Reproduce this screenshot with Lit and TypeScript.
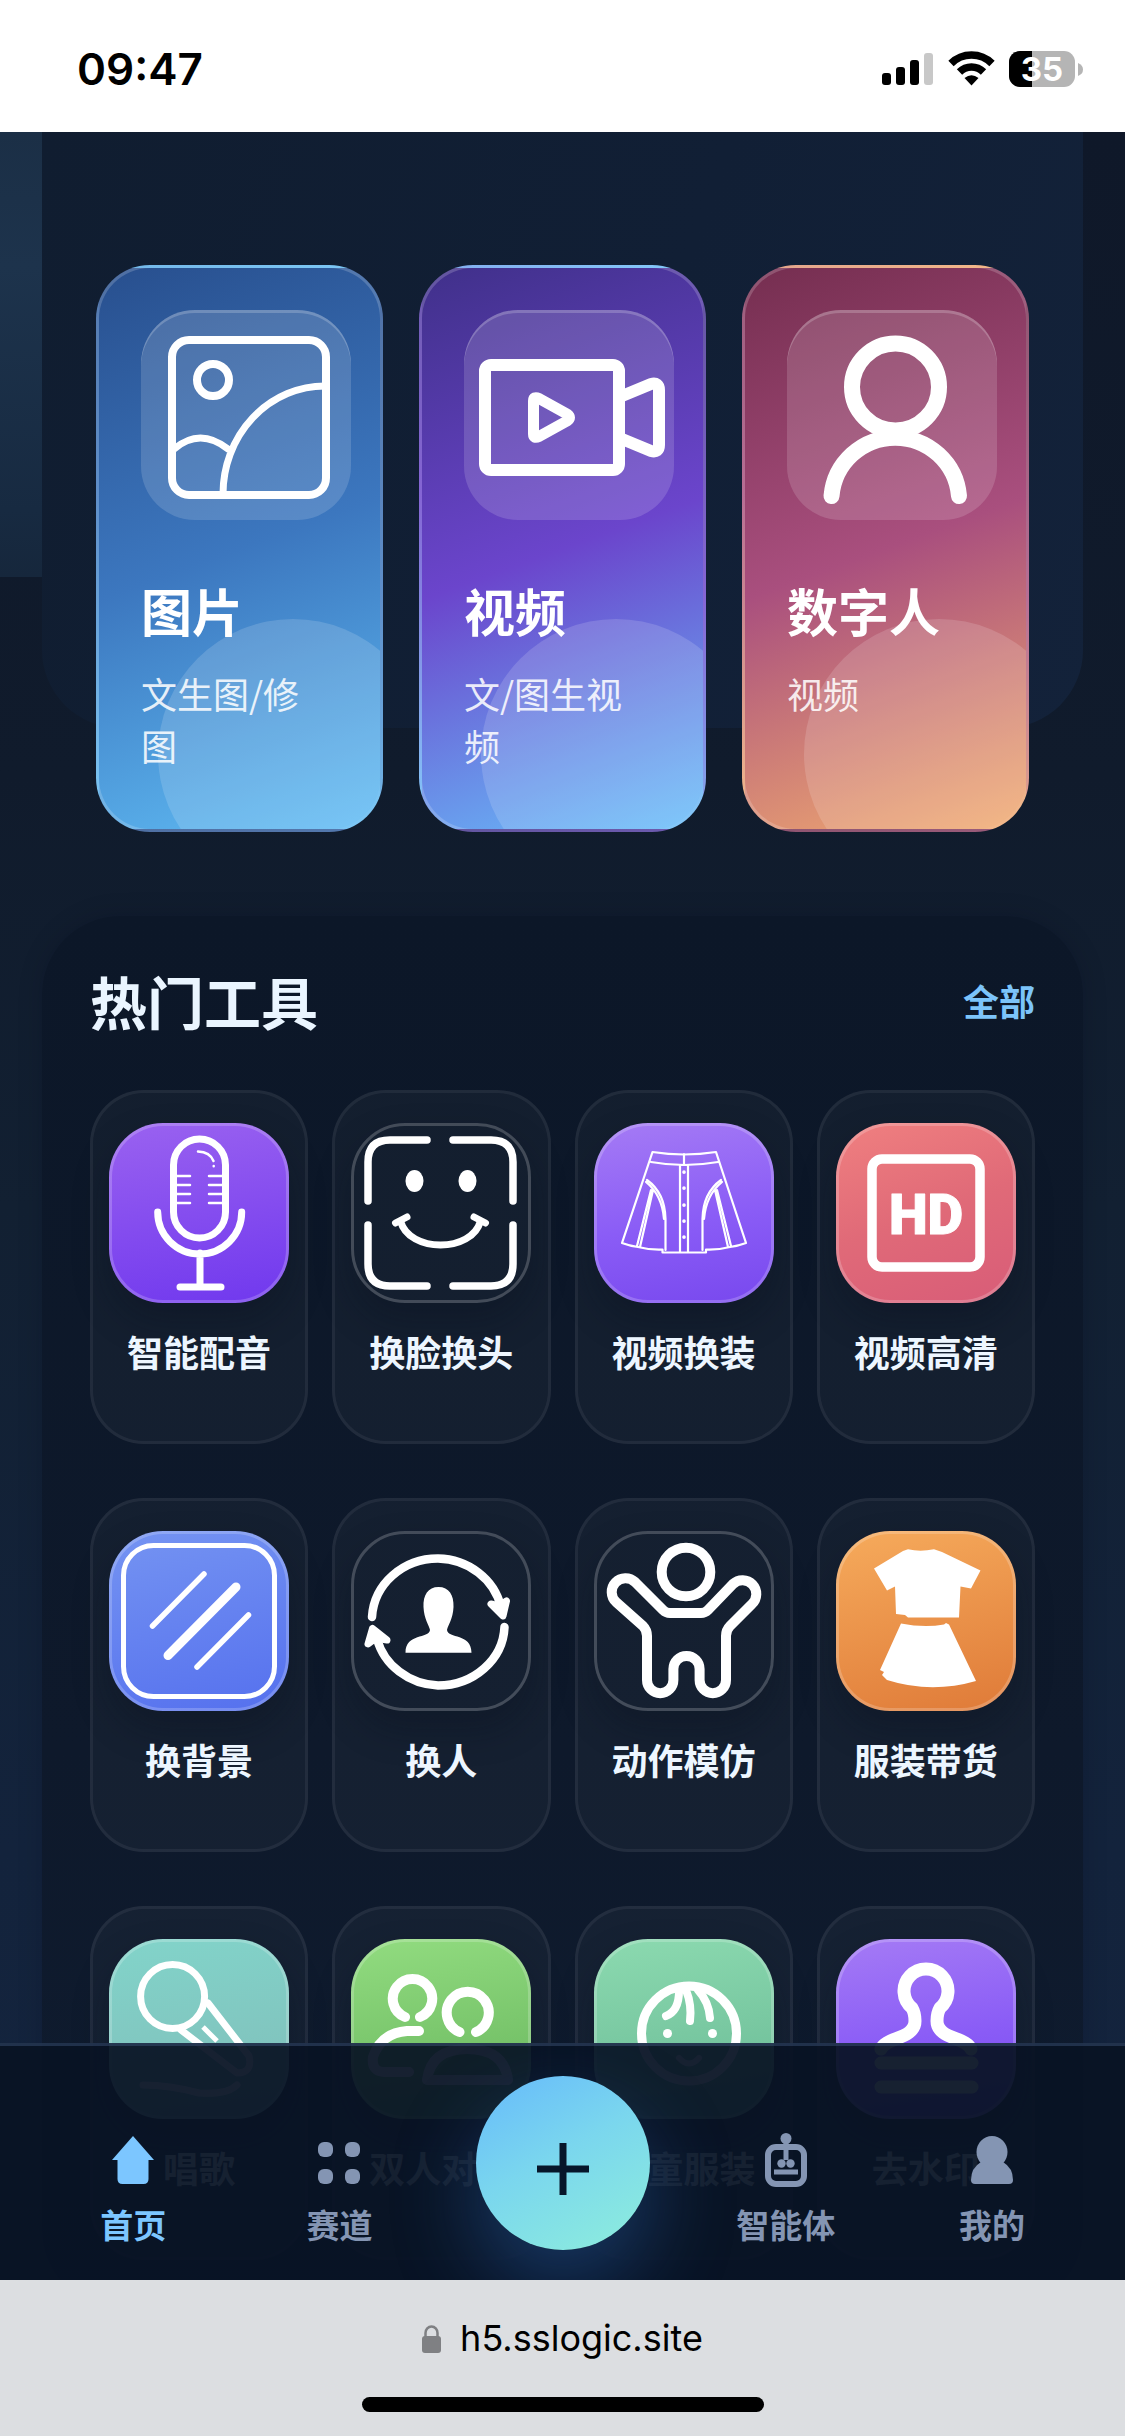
import { LitElement, html, css, svg, SVGTemplateResult } from "lit";
import { customElement } from "lit/decorators.js";

interface Entry {
  label: string;
  tone: string;
  icon: SVGTemplateResult;
}

const features: (Entry & { note: string })[] = [
  {
    label: "图片",
    note: "文生图/修图",
    tone: "blue",
    icon: svg`
      <g stroke-width="8">
        <rect x="31" y="30" width="154" height="155" rx="17" />
        <circle cx="72" cy="70" r="16" />
        <path stroke-width="7" d="M184 76 A102 108 0 0 0 82 184 M33 139 Q59 117 87 139" />
      </g>`,
  },
  {
    label: "视频",
    note: "文/图生视频",
    tone: "violet",
    icon: svg`
      <g stroke-width="12">
        <rect x="21" y="55" width="134" height="105" rx="6" />
        <path stroke-width="11" d="M69.500 91 Q69.500 86 75 88.500 L103 104 Q108 107.500 103 111 L75 126.500 Q69.500 129 69.500 124 Z" />
        <path d="M158 86 L187 74 Q195 72 195 80 V135 Q195 143 187 141 L158 129" />
      </g>`,
  },
  {
    label: "数字人",
    note: "视频",
    tone: "rose",
    icon: svg`
      <g stroke-width="16">
        <circle cx="108.500" cy="77" r="43.500" />
        <path d="M44.500 186 A64 64 0 0 1 172 186" />
      </g>`,
  },
];

const tools: Entry[] = [
  {
    label: "智能配音",
    tone: "purple-deep",
    icon: svg`
      <g stroke-width="7">
        <rect x="64.500" y="16" width="52" height="99" rx="26" />
        <path d="M48.700 89 A42 42 0 0 0 132.700 89 M91 130 V164 M71 164 H112" />
        <path stroke-width="2.500" d="M67 53 H81 M67 62 H81 M67 71 H81 M67 80 H81 M100 53 H114 M100 62 H114 M100 71 H114 M100 80 H114 M89 28.500 Q101 29 104.500 38 M104.700 43 V43.200" />
      </g>`,
  },
  {
    label: "换脸换头",
    tone: "clear",
    icon: svg`
      <g stroke-width="7.500">
        <path d="M17 78 V39 Q17 17 39 17 H76 M102 17 H140 Q162 17 162 39 V78 M162 102 V141 Q162 163 140 163 H102 M76 163 H39 Q17 163 17 141 V102" />
        <path stroke-width="7" d="M49.500 98 C58 130 121 130 129.500 98 M44.500 100 L56 94 M123 94 L134.500 100" />
        <g class="solid"><ellipse cx="63.500" cy="58" rx="9" ry="11" /><ellipse cx="116.500" cy="58" rx="9" ry="11" /></g>
      </g>`,
  },
  {
    label: "视频换装",
    tone: "purple",
    icon: svg`
      <g stroke-width="2.200">
        <path d="M58.500 29 Q90 34 122 29 L152 120 Q144 123 136 124 Q124 127 112 126.500 V129.500 H68.500 V126.500 Q56 127 44 124 Q36 123 28 120 Z M57 39 Q90 45 124 39 M90 31 V42 M86 42 V129 M94 42 V129" />
        <path d="M53 57 Q71 70 71.500 96 V127 M52 59 Q68 72 70 96 M59 67 L46 124 M57 67 L43 123 M127 57 Q109 70 108.500 96 V127 M128 59 Q112 72 110 96 M121 67 L134 124 M123 67 L137 123" />
        <path stroke-width="3.600" d="M90 49 V49.200 M90 65 V65.200 M90 82 V82.200 M90 98 V98.200 M90 114 V114.200" />
      </g>`,
  },
  {
    label: "视频高清",
    tone: "red",
    icon: svg`
      <rect x="36" y="36" width="108" height="108" rx="10" stroke-width="9.500" />
      <text class="mark" x="90" y="110.500" text-anchor="middle">HD</text>`,
  },
  {
    label: "换背景",
    tone: "indigo",
    icon: svg`
      <rect x="14.500" y="14.500" width="151" height="151" rx="30" stroke-width="5" />
      <path stroke-width="5.500" d="M43.500 95 L95 43 M88 136 L139.500 84" />
      <path stroke-width="9" d="M59 124.500 L127 56" />`,
  },
  {
    label: "换人",
    tone: "clear",
    icon: svg`
      <path stroke-width="8.500" d="M21 86 A66 62 0 0 1 87 27.500 A66 62 0 0 1 150 76 M153.500 96 A66.500 61 0 0 1 87 154.500 A66 62 0 0 1 26 108" />
      <path class="solid" stroke="#fff" stroke-width="7" d="M140 73 L148 75 L155.500 70 L152 85 Z M21.500 97.500 L17 113 L25 107 L36 109 Z" />
      <path class="solid" d="M87.500 56 C98 56 103 64 102.500 76 C102 88 97 94 96 99 C97 108 120.500 102 120.500 121.700 H54.500 C54.500 102 78 108 79 99 C78 94 73 88 72.500 76 C72 64 77 56 87.500 56 Z" />`,
  },
  {
    label: "动作模仿",
    tone: "clear",
    icon: svg`
      <g stroke-width="10">
        <circle cx="92" cy="41" r="24.300" />
        <path d="M41 51 L69 79 Q72 82 76 82 H107 Q111 82 114 79 L139 53 A13.500 13.500 0 0 1 158 73 L136 95 Q132 99 132 105 V149 A13.200 13.200 0 0 1 105.600 149 V138 A13.100 13.100 0 0 0 79.400 138 V149 A13.200 13.200 0 0 1 53 149 V105 Q53 99 49 95 L22 71 A13.500 13.500 0 0 1 41 51 Z" />
      </g>`,
  },
  {
    label: "服装带货",
    tone: "orange",
    icon: svg`
      <path class="solid" d="M38 37.500 L67 20 L72 18.300 Q84 21 98 18.300 L106 21 L144.500 39.500 L135 57.500 L124.500 55.500 L123 86.500 H72 L69 84 L60 83 L59 55.500 L51 59.500 Z" />
      <path class="solid" d="M65 92.500 Q88 97 108 93.500 L110 92 L113 93.500 L140 150 Q95 163 51 149 L46 144 L48 141 L44 139 Z" />`,
  },
  {
    label: "唱歌",
    tone: "teal",
    icon: svg`
      <g stroke-width="7">
        <circle cx="63.600" cy="57.500" r="32" />
        <path d="M99 64 L140 117 Q144 134 128 134 L72 91 M34 146 Q60 146 90 154 Q118 156 128 146" />
        <path stroke-width="5" stroke-linecap="butt" d="M94 88 L108 102" />
      </g>`,
  },
  {
    label: "双人对话",
    tone: "green",
    icon: svg`
      <g stroke-width="10">
        <path d="M54 78 A19.700 19.700 0 1 1 69 78 M108.500 93 A21 21 0 1 1 125 93 M68 92 H56 Q30 94 22 118 Q20 133 34 133 H58" />
        <path d="M76 141 Q80 110 116.500 110 Q153 110 157 141 Z" />
      </g>`,
  },
  {
    label: "儿童服装",
    tone: "mint",
    icon: svg`
      <g stroke-width="9">
        <circle cx="95" cy="94.500" r="47.500" />
        <path stroke-width="8" d="M85 52 Q85 72 72 77 M92 51 Q98 66 96 82 M104 51 Q115 63 116 79" />
        <path stroke-width="6" d="M85 119 Q95 130 105 119" />
        <g class="solid"><circle cx="73.500" cy="94.500" r="4.500" /><circle cx="118.500" cy="94.500" r="4.500" /></g>
      </g>`,
  },
  {
    label: "去水印",
    tone: "purple",
    icon: svg`
      <g stroke-width="13">
        <path d="M45 110 C50 98 79 100 79 82 Q79 74 76 69 A22 22 0 1 1 104 69 Q101 74 101 82 C101 100 130 98 135 110" />
        <path d="M45 124 H136 M45 148 H136" />
      </g>`,
  },
];

const homeIcon = svg`<path d="M21 0 L42 24 H36.500 V43 Q36.500 48 31.500 48 H10.500 Q5.500 48 5.500 43 V24 H0 Z" />`;
const gridIcon = svg`<rect x="0" y="6" width="15" height="15" rx="6" /><rect x="27" y="6" width="15" height="15" rx="6" /><rect x="0" y="33" width="15" height="15" rx="6" /><rect x="27" y="33" width="15" height="15" rx="6" />`;
const robotIcon = svg`<circle cx="21" cy="2.500" r="5.500" /><path d="M18.500 4 H23.500 V24 H18.500 Z" />
  <rect x="3" y="11" width="36" height="37" rx="8" fill="none" stroke="currentColor" stroke-width="6" />
  <circle cx="16.500" cy="27.500" r="4.200" /><circle cx="25.500" cy="27.500" r="4.200" /><rect x="9" y="33.500" width="24" height="5" />`;
const userIcon = svg`<ellipse cx="21" cy="16" rx="15.500" ry="16" /><path d="M10 26 H32 Q42 32 42 44 Q42 48 38 48 H4 Q0 48 0 44 Q0 32 10 26 Z" />`;

const tabs = [
  { label: "首页", icon: homeIcon, active: true },
  { label: "赛道", icon: gridIcon, active: false },
  { label: "智能体", icon: robotIcon, active: false },
  { label: "我的", icon: userIcon, active: false },
];

@customElement("status-bar")
class StatusBar extends LitElement {
  static styles = css`
    :host {
      display: flex;
      align-items: center;
      justify-content: space-between;
      height: 132px;
      padding: 6px 42px 0 77px;
      box-sizing: border-box;
      background: #fff;
      color: #000;
      font-family: Inter, "Liberation Sans", sans-serif;
    }
    .time { font-size: 44px; line-height: 54px; font-weight: 600; }
    .signals { display: block; width: 202px; height: 38px; }
    .level { font: 700 33px Inter, "Liberation Sans", sans-serif; }
  `;
  render() {
    return html`
      <span class="time">09:47</span>
      <svg class="signals" viewBox="0 0 202 38" role="img" aria-label="信号 Wi-Fi 电量">
        <rect x="1" y="23" width="9" height="12" rx="3" />
        <rect x="15" y="17" width="9" height="18" rx="3" />
        <rect x="29" y="10" width="9" height="25" rx="3" />
        <rect x="43" y="3" width="9" height="32" rx="3" fill="#c8c8c8" />
        <g fill="none" stroke="#000" stroke-width="7.500">
          <path d="M70 13.500 A29 29 0 0 1 111 13.500" />
          <path d="M78.500 22 A17 17 0 0 1 102.500 22" />
        </g>
        <path d="M83.500 28 Q90.500 22.500 97.500 28 L90.500 35.500 Z" />
        <clipPath id="cell"><rect x="128" y="1" width="66" height="36" rx="11" /></clipPath>
        <g clip-path="url(#cell)">
          <rect x="128" y="1" width="66" height="36" fill="#b5b5b5" />
          <rect x="128" y="1" width="23" height="36" />
        </g>
        <path d="M197 13 Q202 15 202 19.500 Q202 24 197 26 Z" fill="#b5b5b5" />
        <text class="level" x="161" y="31" text-anchor="middle" fill="#fff">35</text>
      </svg>
    `;
  }
}

@customElement("feature-panel")
class FeaturePanel extends LitElement {
  static styles = css`
    :host {
      display: block;
      height: 596px;
      padding: 133px 54px 0;
      box-sizing: border-box;
      border-radius: 0 0 78px 78px;
      background: linear-gradient(110deg, #101d30, #111f35 55%, #13223a);
    }
    .cards { display: grid; grid-template-columns: repeat(3, 1fr); gap: 36px; }
    .card {
      position: relative;
      overflow: hidden;
      display: flex;
      flex-direction: column;
      align-items: flex-start;
      height: 567px;
      padding: 42px;
      box-sizing: border-box;
      border: 3px solid rgba(255, 255, 255, 0.18);
      border-radius: 54px;
      color: #fff;
      text-align: left;
      text-decoration: none;
    }
    .card::after {
      content: "";
      position: absolute;
      right: -48px;
      bottom: -60px;
      width: 270px;
      height: 270px;
      border-radius: 50%;
      background: rgba(255, 255, 255, 0.15);
    }
    .blue { background-image: linear-gradient(160deg, #284f8e, #3c77bf 50%, #60bdf5); }
    .violet { background-image: linear-gradient(160deg, #40308a, #6b45cc 50%, #68c0fa); }
    .rose { background-image: linear-gradient(160deg, #752e50, #a94f7e 50%, #f2ac70); }
    .art {
      width: 210px;
      height: 210px;
      border-radius: 54px;
      background: rgba(255, 255, 255, 0.15);
      box-shadow: inset 0 3px 0 rgba(255, 255, 255, 0.2);
    }
    .art svg {
      display: block;
      fill: none;
      stroke: #fff;
      stroke-linecap: round;
      stroke-linejoin: round;
    }
    .title { z-index: 1; margin-top: 57px; font-size: 51px; line-height: 66px; font-weight: 600; }
    .note { z-index: 1; margin-top: 24px; font-size: 36px; line-height: 52px; opacity: 0.86; width: 180px; }
  `;
  render() {
    return html`<div class="cards">
      ${features.map(
        (f) => html`<a class="card ${f.tone}" href="#">
          <span class="art"><svg viewBox="0 0 210 210" aria-hidden="true">${f.icon}</svg></span>
          <span class="title">${f.label}</span>
          <span class="note">${f.note}</span>
        </a>`
      )}
    </div>`;
  }
}

@customElement("tool-panel")
class ToolPanel extends LitElement {
  static styles = css`
    :host {
      display: block;
      padding: 45px 48px 48px;
      border-radius: 78px;
      background: linear-gradient(#0c1728, #0e192b 60%, #0f1c30);
      box-shadow: 0 0 24px rgba(4, 12, 26, 0.18);
    }
    .head { display: flex; align-items: center; justify-content: space-between; height: 78px; }
    h2 { margin: 0; font-size: 57px; line-height: 78px; font-weight: 600; color: #eaf5ff; }
    .all { font-size: 36px; line-height: 52px; font-weight: 600; color: #7cc4fa; text-decoration: none; }
    .grid { display: grid; grid-template-columns: repeat(4, 1fr); gap: 54px 24px; margin-top: 51px; }
    .tool {
      display: flex;
      flex-direction: column;
      align-items: center;
      gap: 22px;
      min-height: 354px;
      padding: 30px 0;
      box-sizing: border-box;
      border: 3px solid rgba(255, 255, 255, 0.06);
      border-radius: 54px;
      background: rgba(255, 255, 255, 0.03);
      color: #edf6ff;
      font: inherit;
    }
    .art {
      width: 180px;
      height: 180px;
      flex: none;
      box-sizing: border-box;
      border: 3px solid rgba(255, 255, 255, 0.2);
      border-radius: 54px;
      background-origin: border-box;
      box-shadow: 0 18px 36px rgba(6, 12, 26, 0.3);
    }
    .art svg {
      display: block;
      width: 180px;
      height: 180px;
      margin: -3px;
      fill: none;
      stroke: #fff;
      stroke-linecap: round;
      stroke-linejoin: round;
    }
    .solid { fill: #fff; }
    g.solid { stroke: none; }
    path.solid:not([stroke]) { stroke: none; }
    .mark { font: 900 55px Roboto, "Open Sans", sans-serif; fill: #fff; stroke-width: 1; }
    .label { font-size: 36px; line-height: 52px; font-weight: 600; white-space: nowrap; }
    .clear { background-color: transparent; }
    .purple-deep { background-image: linear-gradient(170deg, #9a62f0, #7038ee); }
    .purple { background-image: linear-gradient(170deg, #a57bf5, #8a5cf6 55%, #7848ee); }
    .red { background-image: linear-gradient(160deg, #f08080, #e06a78 50%, #d85c78); }
    .indigo { background-image: linear-gradient(165deg, #7594f2, #5570ee); }
    .orange { background-image: linear-gradient(165deg, #f6ab5c, #df7a38); }
    .teal { background-image: linear-gradient(170deg, #82d4ca, #80bcb8); }
    .green { background-image: linear-gradient(170deg, #92dc80, #66b45c); }
    .mint { background-image: linear-gradient(170deg, #8cdab0, #68b894); }
  `;
  render() {
    return html`
      <div class="head"><h2>热门工具</h2><a class="all" href="#">全部</a></div>
      <div class="grid">
        ${tools.map(
          (t) => html`<button class="tool" type="button">
            <span class="art ${t.tone}"><svg viewBox="0 0 180 180" aria-hidden="true">${t.icon}</svg></span>
            <span class="label">${t.label}</span>
          </button>`
        )}
      </div>
    `;
  }
}

@customElement("tab-bar")
class TabBar extends LitElement {
  static styles = css`
    :host {
      display: grid;
      grid-template-columns: 1fr 1fr 240px 1fr 1fr;
      height: 237px;
      padding: 30px 30px 24px;
      box-sizing: border-box;
      overflow: hidden;
      border-top: 3px solid rgba(70, 96, 136, 0.4);
      background: rgba(9, 19, 36, 0.94);
    }
    .tab {
      display: flex;
      flex-direction: column;
      align-items: center;
      justify-content: flex-end;
      gap: 16px;
      color: #8495b3;
      font-size: 33px;
      line-height: 48px;
      font-weight: 600;
      text-decoration: none;
      padding-bottom: 8px;
    }
    .active { color: #7cc6ff; }
    .tab svg { width: 42px; height: 48px; fill: currentColor; overflow: visible; }
    .create {
      justify-self: center;
      width: 174px;
      height: 174px;
      padding: 0;
      border: 0;
      border-radius: 50%;
      background: linear-gradient(150deg, #68bdfa 5%, #7ad6ee 45%, #8eeedc);
      box-shadow: 0 36px 84px rgba(50, 120, 210, 0.36);
      display: grid;
      place-items: center;
    }
    .create svg { width: 52px; height: 52px; margin-top: 12px; stroke: #07162a; stroke-width: 7; }
  `;
  tab(t: (typeof tabs)[number]) {
    return html`<a class="tab ${t.active ? "active" : ""}" href="#">
      <svg viewBox="0 0 42 48" aria-hidden="true">${t.icon}</svg><span>${t.label}</span>
    </a>`;
  }
  render() {
    return html`
      ${tabs.slice(0, 2).map((t) => this.tab(t))}
      <button class="create" type="button" aria-label="创作">
        <svg viewBox="0 0 52 52" aria-hidden="true"><path d="M26 0 V52 M0 26 H52" /></svg>
      </button>
      ${tabs.slice(2).map((t) => this.tab(t))}
    `;
  }
}

@customElement("address-bar")
class AddressBar extends LitElement {
  static styles = css`
    :host {
      display: flex;
      flex-direction: column;
      align-items: center;
      justify-content: space-between;
      height: 156px;
      padding: 33px 0 24px;
      box-sizing: border-box;
      background: #dcdee1;
      color: #000;
      font-family: Inter, "Liberation Sans", sans-serif;
    }
    .site { display: flex; align-items: center; gap: 19px; font-size: 36px; line-height: 51px; }
    .lock { width: 19px; height: 28px; }
    .handle { width: 402px; height: 15px; border-radius: 8px; background: #000; }
  `;
  render() {
    return html`
      <div class="site">
        <svg class="lock" viewBox="0 0 19 28" aria-hidden="true">
          <rect y="11" width="19" height="17" rx="3" fill="#7f8083" />
          <path d="M3.500 13 V8 A6 6.500 0 0 1 15.500 8 V13" fill="none" stroke="#7f8083" stroke-width="2.500" />
        </svg>
        <span>h5.sslogic.site</span>
      </div>
      <div class="handle"></div>
    `;
  }
}

@customElement("app-root")
class AppRoot extends LitElement {
  static styles = css`
    :host {
      display: flex;
      flex-direction: column;
      height: 100vh;
      font-family: "Noto Sans CJK SC", "Liberation Sans", sans-serif;
    }
    status-bar, address-bar { flex: none; }
    .view {
      position: relative;
      flex: 1;
      min-height: 0;
      overflow: hidden;
      background:
        linear-gradient(#1b2f46, #1d334c 30%, #172a41 85%, #16273c) left top / 42px 445px no-repeat,
        linear-gradient(#0f1829, #101b2c 30%, #122032 50%, #13233c 80%, #14243e);
    }
    .scroll { display: flex; flex-direction: column; gap: 188px; padding: 0 42px; }
    tab-bar { position: absolute; left: 0; right: 0; bottom: 0; }
  `;
  render() {
    return html`
      <status-bar></status-bar>
      <main class="view">
        <div class="scroll">
          <feature-panel></feature-panel>
          <tool-panel></tool-panel>
        </div>
        <tab-bar></tab-bar>
      </main>
      <address-bar></address-bar>
    `;
  }
}
